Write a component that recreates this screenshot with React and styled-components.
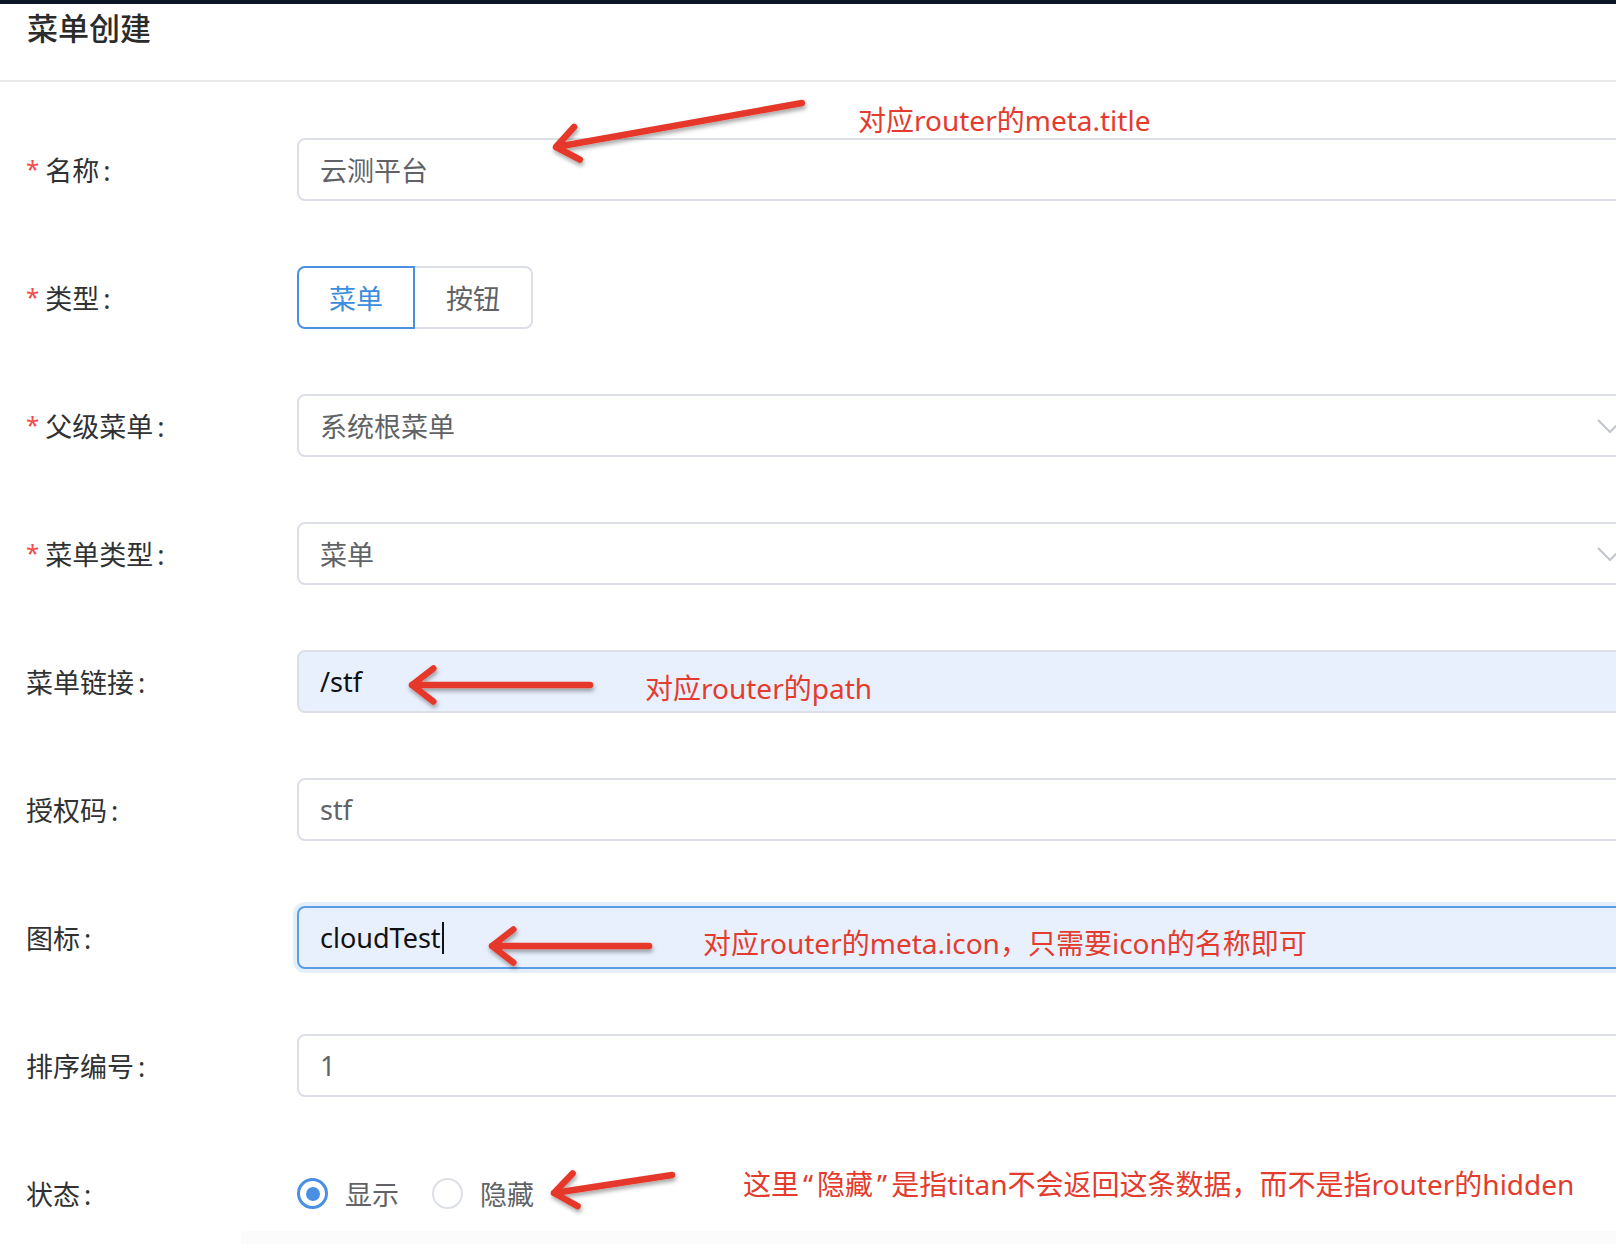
import React from 'react'
import styled, { createGlobalStyle } from 'styled-components'

const GlobalStyle = createGlobalStyle`
  html, body {
    margin: 0;
    padding: 0;
    background: #fff;
    overflow: hidden;
  }
  body {
    font-family: 'Noto Sans', 'Noto Sans CJK SC', sans-serif;
  }
`

const Page = styled('div')`
  position: relative;
  width: 1616px;
  height: 1244px;
  overflow: hidden;
  background: #fff;
`
const TopBar = styled('div')`
  height: 4px;
  background: #0b1729;
`
const Header = styled('div')`
  height: 78px;
  box-sizing: border-box;
  padding: 5px 27px 0;
  border-bottom: 2px solid #e8e8e8;
`
const Title = styled('h2')`
  margin: 0;
  font-size: 31px;
  line-height: 38px;
  font-weight: 500;
  color: #2b2b2b;
`
const Form = styled('div')`
  width: 1648px;
  padding-top: 56px;
  display: flex;
  flex-direction: column;
  gap: 65px;
`
const Row = styled('div')`
  display: flex;
  align-items: center;
  height: 63px;
`
const Label = styled('label')`
  flex-shrink: 0;
  width: 297px;
  box-sizing: border-box;
  padding-left: 26px;
  font-size: 27px;
  color: #303133;
  white-space: nowrap;
`
const Star = styled('span')`
  color: #f04b4b;
  font-size: 24px;
  margin-right: 6px;
  vertical-align: 3px;
`
const Colon = styled('span')`
  margin-left: 4px;
`
const Field = styled('div')`
  flex: 1;
  height: 63px;
  box-sizing: border-box;
  display: flex;
  align-items: center;
  justify-content: space-between;
  padding: 0 23px 0 21px;
  border: 2px solid ${p => (p.$focused ? '#5b9ce6' : '#dcdfe6')};
  border-radius: 8px;
  background: ${p => (p.$filled ? '#e8f0fe' : '#fff')};
  box-shadow: ${p => (p.$focused ? '0 0 0 4px rgba(91, 156, 230, 0.16)' : 'none')};
  font-size: 27px;
  color: ${p => (p.$filled ? '#111' : '#606266')};
`
const Value = styled('span')`
  display: flex;
  align-items: center;
`
const Caret = styled('span')`
  display: inline-block;
  width: 2px;
  height: 32px;
  margin-left: 1px;
  background: #111;
`
const Chevron = styled('svg')`
  width: 26px;
  height: 14px;
  flex-shrink: 0;
`
const Segment = styled('div')`
  display: flex;
`
const SegButton = styled('div')`
  width: 118px;
  height: 63px;
  box-sizing: border-box;
  display: flex;
  align-items: center;
  justify-content: center;
  font-size: 27px;
  color: ${p => (p.$active ? '#3c8de0' : '#606266')};
  border: 2px solid ${p => (p.$active ? '#4a90e2' : '#dcdfe6')};
  border-radius: 8px 0 0 8px;

  & + & {
    border-left: none;
    border-radius: 0 8px 8px 0;
  }
`
const RadioGroup = styled('div')`
  display: flex;
  align-items: center;
`
const RadioItem = styled('div')`
  display: flex;
  align-items: center;
  margin-right: 33px;
  font-size: 27px;
  color: #606266;
`
const RadioDot = styled('span')`
  width: 31px;
  height: 31px;
  box-sizing: border-box;
  border-radius: 50%;
  border: ${p => (p.$checked ? '3px solid #4a90e2' : '2px solid #dcdfe6')};
  display: flex;
  align-items: center;
  justify-content: center;
  margin-right: 17px;

  &::after {
    content: '';
    width: 14px;
    height: 14px;
    border-radius: 50%;
    background: ${p => (p.$checked ? '#4a90e2' : 'transparent')};
  }
`
const Footer = styled('div')`
  margin: 6px 0 0 241px;
  height: 20px;
  background: #fbfbfb;
`
const Notes = styled('div')`
  position: absolute;
  inset: 0;
  pointer-events: none;
`
const Arrows = styled('svg')`
  position: absolute;
  left: 0;
  top: 0;
`
const Note = styled('span')`
  position: absolute;
  left: ${p => p.$x}px;
  top: ${p => p.$y}px;
  font-size: 28px;
  line-height: 34px;
  color: #e33b2d;
  white-space: nowrap;
`
const Quote = styled('span')`
  padding: 0 4px;
`

const arrows = [
  { tail: [802, 103], tip: [556, 147] },
  { tail: [590, 685], tip: [412, 685] },
  { tail: [649, 946], tip: [492, 946] },
  { tail: [672, 1175], tip: [554, 1193] },
]

const notes = [
  { x: 858, y: 103, text: '对应router的meta.title' },
  { x: 645, y: 671, text: '对应router的path' },
  { x: 703, y: 926, text: '对应router的meta.icon，只需要icon的名称即可' },
  {
    x: 743,
    y: 1167,
    text: (
      <>
        这里<Quote>“</Quote>隐藏<Quote>”</Quote>是指titan不会返回这条数据，而不是指router的hidden
      </>
    ),
  },
]

const arrowPath = ({ tail, tip }) => {
  const dx = tail[0] - tip[0]
  const dy = tail[1] - tip[1]
  const len = Math.hypot(dx, dy)
  const ux = dx / len
  const uy = dy / len
  const wing = (a) => {
    const c = Math.cos(a)
    const s = Math.sin(a)
    return [tip[0] + (ux * c - uy * s) * 27, tip[1] + (ux * s + uy * c) * 27]
  }
  const w1 = wing(0.66)
  const w2 = wing(-0.66)
  return `M${tail[0]} ${tail[1]} L${tip[0]} ${tip[1]} M${w1[0]} ${w1[1]} L${tip[0]} ${tip[1]} L${w2[0]} ${w2[1]}`
}

const Arrow = () => (
  <Chevron viewBox="0 0 26 14">
    <path d="M1 1 L13 13 L25 1" fill="none" stroke="#c0c4cc" strokeWidth="2" />
  </Chevron>
)

const FormLabel = ({ required, children }) => (
  <Label>
    {required && <Star>*</Star>}
    {children}
    <Colon>:</Colon>
  </Label>
)

const App = () => {
  return (
    <>
      <GlobalStyle />
      <Page>
        <TopBar />
        <Header>
          <Title>菜单创建</Title>
        </Header>
        <Form>
          <Row>
            <FormLabel required>名称</FormLabel>
            <Field>
              <Value>云测平台</Value>
            </Field>
          </Row>
          <Row>
            <FormLabel required>类型</FormLabel>
            <Segment>
              <SegButton $active>菜单</SegButton>
              <SegButton>按钮</SegButton>
            </Segment>
          </Row>
          <Row>
            <FormLabel required>父级菜单</FormLabel>
            <Field>
              <Value>系统根菜单</Value>
              <Arrow />
            </Field>
          </Row>
          <Row>
            <FormLabel required>菜单类型</FormLabel>
            <Field>
              <Value>菜单</Value>
              <Arrow />
            </Field>
          </Row>
          <Row>
            <FormLabel>菜单链接</FormLabel>
            <Field $filled>
              <Value>/stf</Value>
            </Field>
          </Row>
          <Row>
            <FormLabel>授权码</FormLabel>
            <Field>
              <Value>stf</Value>
            </Field>
          </Row>
          <Row>
            <FormLabel>图标</FormLabel>
            <Field $filled $focused>
              <Value>
                cloudTest
                <Caret />
              </Value>
            </Field>
          </Row>
          <Row>
            <FormLabel>排序编号</FormLabel>
            <Field>
              <Value>1</Value>
            </Field>
          </Row>
          <Row>
            <FormLabel>状态</FormLabel>
            <RadioGroup>
              <RadioItem>
                <RadioDot $checked />
                显示
              </RadioItem>
              <RadioItem>
                <RadioDot />
                隐藏
              </RadioItem>
            </RadioGroup>
          </Row>
        </Form>
        <Footer />

        <Notes>
          <Arrows width="1616" height="1244" viewBox="0 0 1616 1244">
            <defs>
              <filter id="shadow" x="-20%" y="-50%" width="140%" height="200%">
                <feDropShadow dx="1" dy="3" stdDeviation="2" floodColor="#000" floodOpacity="0.35" />
              </filter>
            </defs>
            {arrows.map((a, i) => (
              <path
                key={i}
                d={arrowPath(a)}
                fill="none"
                stroke="#e5392b"
                strokeWidth="6.5"
                strokeLinecap="round"
                strokeLinejoin="round"
                filter="url(#shadow)"
              />
            ))}
          </Arrows>
          {notes.map((n, i) => (
            <Note key={i} $x={n.x} $y={n.y}>
              {n.text}
            </Note>
          ))}
        </Notes>
      </Page>
    </>
  )
}

export default App
